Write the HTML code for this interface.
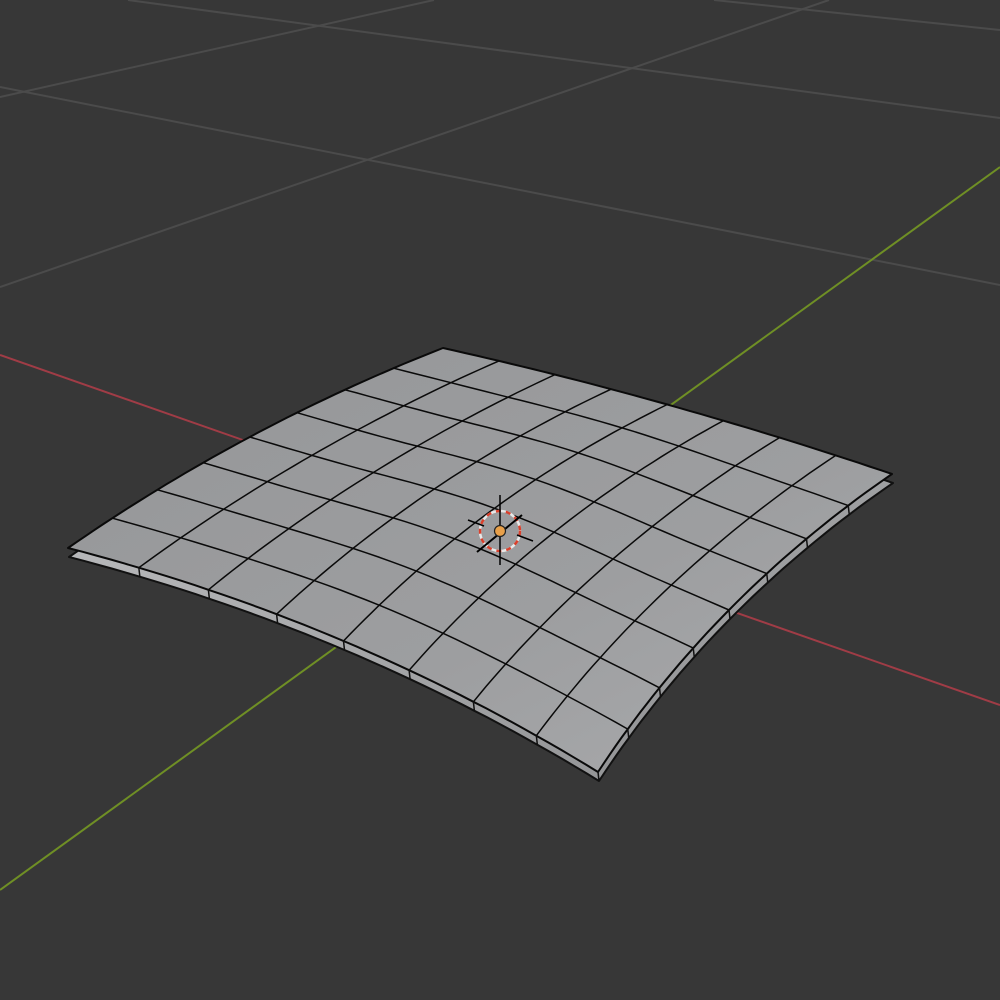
<!DOCTYPE html>
<html><head><meta charset="utf-8"><style>
html,body{margin:0;padding:0;background:#373737;width:1000px;height:1000px;overflow:hidden}
svg{display:block}
</style></head><body>
<svg id="s" width="1000" height="1000" viewBox="0 0 1000 1000" xmlns="http://www.w3.org/2000/svg">
<defs>
<linearGradient id="top" x1="0" y1="0" x2="1" y2="1">
<stop offset="0" stop-color="#959698"/><stop offset="0.6" stop-color="#9d9ea0"/><stop offset="1" stop-color="#aaabad"/>
</linearGradient>
<linearGradient id="side" x1="0" y1="0" x2="1" y2="1">
<stop offset="0" stop-color="#c4c5c7"/><stop offset="1" stop-color="#8a8b8d"/>
</linearGradient>
</defs>
<rect width="1000" height="1000" fill="#373737"/>
<g stroke="#4b4b4b" stroke-width="2" fill="none">
<line x1="0" y1="87" x2="1000" y2="285"/>
<line x1="0" y1="97" x2="434" y2="0"/>
<line x1="128" y1="0" x2="1000" y2="118"/>
<line x1="714" y1="0" x2="1000" y2="30"/>
<line x1="0" y1="287" x2="829" y2="0"/>
</g>
<line x1="0" y1="355" x2="1000" y2="705" stroke="#a03c46" stroke-width="2"/>
<line x1="1000" y1="167" x2="0" y2="890" stroke="#6f8f25" stroke-width="2"/>
<g id="mesh"></g>
<g>
<circle cx="500" cy="531" r="20" fill="none" stroke="#e8e8e8" stroke-width="2.5"/>
<circle cx="500" cy="531" r="20" fill="none" stroke="#d9402c" stroke-width="2.5" stroke-dasharray="5 5"/>
<line x1="500" y1="495" x2="500" y2="565" stroke="#000" stroke-width="1.5"/>
<line x1="468" y1="520" x2="484" y2="526" stroke="#000" stroke-width="1.5"/>
<line x1="517" y1="535" x2="533" y2="541" stroke="#000" stroke-width="1.5"/>
<line x1="477" y1="552" x2="522" y2="515" stroke="#000" stroke-width="2"/>
<circle cx="500" cy="531" r="5.5" fill="#e8a04a" stroke="#222" stroke-width="1.2"/>
</g>
</svg>
<script>
(function(){
function q(a,c,b,t){var m=1-t;return [m*m*a[0]+2*m*t*c[0]+t*t*b[0], m*m*a[1]+2*m*t*c[1]+t*t*b[1]];}
var P00=[443,348],P10=[892,474],P01=[68,548],P11=[598,772];
var C0c=[667,398],C1c=[354,622],D0c=[244,426],D1c=[713,597];
function S(u,v){
 var c0=q(P00,C0c,P10,u),c1=q(P01,C1c,P11,u),d0=q(P00,D0c,P01,v),d1=q(P10,D1c,P11,v);
 var r=[];
 for(var k=0;k<2;k++){
  r[k]=(1-v)*c0[k]+v*c1[k]+(1-u)*d0[k]+u*d1[k]-((1-u)*(1-v)*P00[k]+u*(1-v)*P10[k]+(1-u)*v*P01[k]+u*v*P11[k]);
 }
 r[1]+=2.5*Math.sin(u*Math.PI*3)*Math.sin(v*Math.PI);
 return r;
}
var N=40;
function pt(p){return p[0].toFixed(1)+","+p[1].toFixed(1);}
var b=[];
for(var i=0;i<=N;i++)b.push(S(i/N,0));
for(var i=0;i<=N;i++)b.push(S(1,i/N));
for(var i=N;i>=0;i--)b.push(S(i/N,1));
for(var i=N;i>=0;i--)b.push(S(0,i/N));
var bs=b.map(pt).join(" ");
var T=9;
var sh=b.map(function(p){return [p[0]+1,p[1]+T];});
var g='';
g+='<polygon points="'+sh.map(pt).join(" ")+'" fill="url(#side)" stroke="#111" stroke-width="2" stroke-linejoin="round"/>';
g+='<polygon points="'+bs+'" fill="url(#top)" stroke="#0a0a0a" stroke-width="2" stroke-linejoin="round"/>';
var G=8;
for(var i=1;i<G;i++){
 var a=[],c=[];
 for(var j=0;j<=N;j++){a.push(pt(S(i/G,j/N)));c.push(pt(S(j/N,i/G)));}
 g+='<polyline points="'+a.join(" ")+'" fill="none" stroke="#0a0a0a" stroke-width="1.5"/>';
 g+='<polyline points="'+c.join(" ")+'" fill="none" stroke="#0a0a0a" stroke-width="1.5"/>';
 var p=S(i/G,1);g+='<line x1="'+p[0]+'" y1="'+p[1]+'" x2="'+(p[0]+1)+'" y2="'+(p[1]+T)+'" stroke="#111" stroke-width="1.5"/>';
 p=S(1,i/G);g+='<line x1="'+p[0]+'" y1="'+p[1]+'" x2="'+(p[0]+1)+'" y2="'+(p[1]+T)+'" stroke="#111" stroke-width="1.5"/>';
}
var p=S(1,1);g+='<line x1="'+p[0]+'" y1="'+p[1]+'" x2="'+(p[0]+1)+'" y2="'+(p[1]+T)+'" stroke="#111" stroke-width="1.5"/>';
document.getElementById('mesh').innerHTML=g;
})();
</script>
</body></html>
